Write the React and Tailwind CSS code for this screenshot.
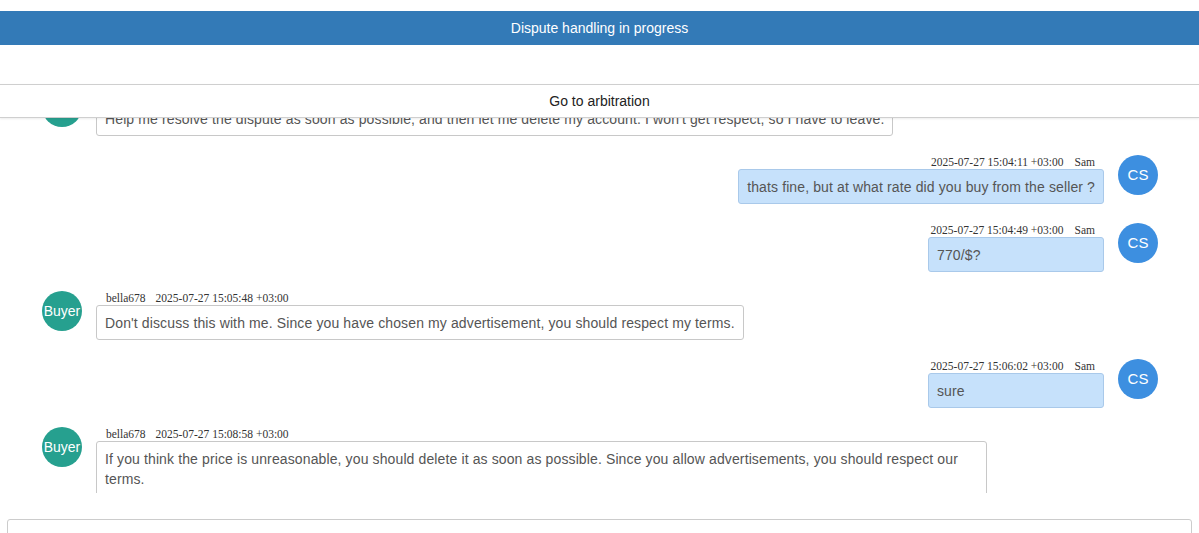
import React from "react";

const messages = [
  {
    from: "buyer",
    name: "bella678",
    time: "2025-07-27 15:03:20 +03:00",
    text: "Help me resolve the dispute as soon as possible, and then let me delete my account. I won't get respect, so I have to leave.",
  },
  { from: "cs", name: "Sam", time: "2025-07-27 15:04:11 +03:00", text: "thats fine, but at what rate did you buy from the seller ?" },
  { from: "cs", name: "Sam", time: "2025-07-27 15:04:49 +03:00", text: "770/$?" },
  {
    from: "buyer",
    name: "bella678",
    time: "2025-07-27 15:05:48 +03:00",
    text: "Don't discuss this with me. Since you have chosen my advertisement, you should respect my terms.",
  },
  { from: "cs", name: "Sam", time: "2025-07-27 15:06:02 +03:00", text: "sure" },
  {
    from: "buyer",
    name: "bella678",
    time: "2025-07-27 15:08:58 +03:00",
    text: "If you think the price is unreasonable, you should delete it as soon as possible. Since you allow advertisements, you should respect our terms.",
  },
];

const meta = "h-[14px] leading-[14px] text-[11.5px] text-[#333] font-['Liberation_Serif',serif] whitespace-nowrap";
const bubble = "rounded-[3px] px-2 pt-[7px] pb-[6px] text-sm leading-5 tracking-[0.12px] text-[#555]";

const BuyerRow = ({ m }) => (
  <div className="flex items-start pl-[42px] mb-[19px]">
    <div className="w-10 h-10 shrink-0 rounded-full bg-[#26a08f] text-white text-[14px] flex items-center justify-center">
      Buyer
    </div>
    <div className="ml-[14px] flex flex-col items-start">
      <div className={`${meta} pl-[10px]`}>
        {m.name}
        <span className="ml-[10px]">{m.time}</span>
      </div>
      <div className={`${bubble} max-w-[891px] bg-white border border-[#c8c8c8]`}>{m.text}</div>
    </div>
  </div>
);

const CsRow = ({ m }) => (
  <div className="flex items-start justify-end pr-[41px] mb-[19px]">
    <div className="mr-[14px] flex flex-col items-end">
      <div className={`${meta} pr-[9px]`}>
        {m.time}
        <span className="ml-[11px]">{m.name}</span>
      </div>
      <div className={`${bubble} min-w-[176px] bg-[#c6e1fb] border border-[#a9c9ea]`}>{m.text}</div>
    </div>
    <div className="w-10 h-10 shrink-0 rounded-full bg-[#3d8fe0] text-white text-[15px] flex items-center justify-center">
      CS
    </div>
  </div>
);

export default function App() {
  return (
    <div className="w-[1199px] h-[533px] overflow-hidden bg-white font-['Liberation_Sans',Arial,sans-serif] pt-[11px] flex flex-col">
      <div className="h-[34px] shrink-0 bg-[#337ab7] text-white text-sm flex items-center justify-center">
        Dispute handling in progress
      </div>
      <div className="h-[39px] shrink-0" />
      <button className="h-[34px] shrink-0 w-full bg-white border-t border-b border-[#cfcfcf] shadow-[0_1px_2px_rgba(0,0,0,0.08)] text-sm text-[#222] relative z-10">
        Go to arbitration
      </button>
      <div className="h-[375px] shrink-0 overflow-hidden">
        <div className="-mt-[31px]">
          {messages.map((m, i) =>
            m.from === "cs" ? <CsRow key={i} m={m} /> : <BuyerRow key={i} m={m} />
          )}
        </div>
      </div>
      <div className="h-[26px] shrink-0" />
      <div className="mx-[7px] h-[40px] shrink-0 border border-[#cccccc] rounded-[3px] bg-white" />
    </div>
  );
}
